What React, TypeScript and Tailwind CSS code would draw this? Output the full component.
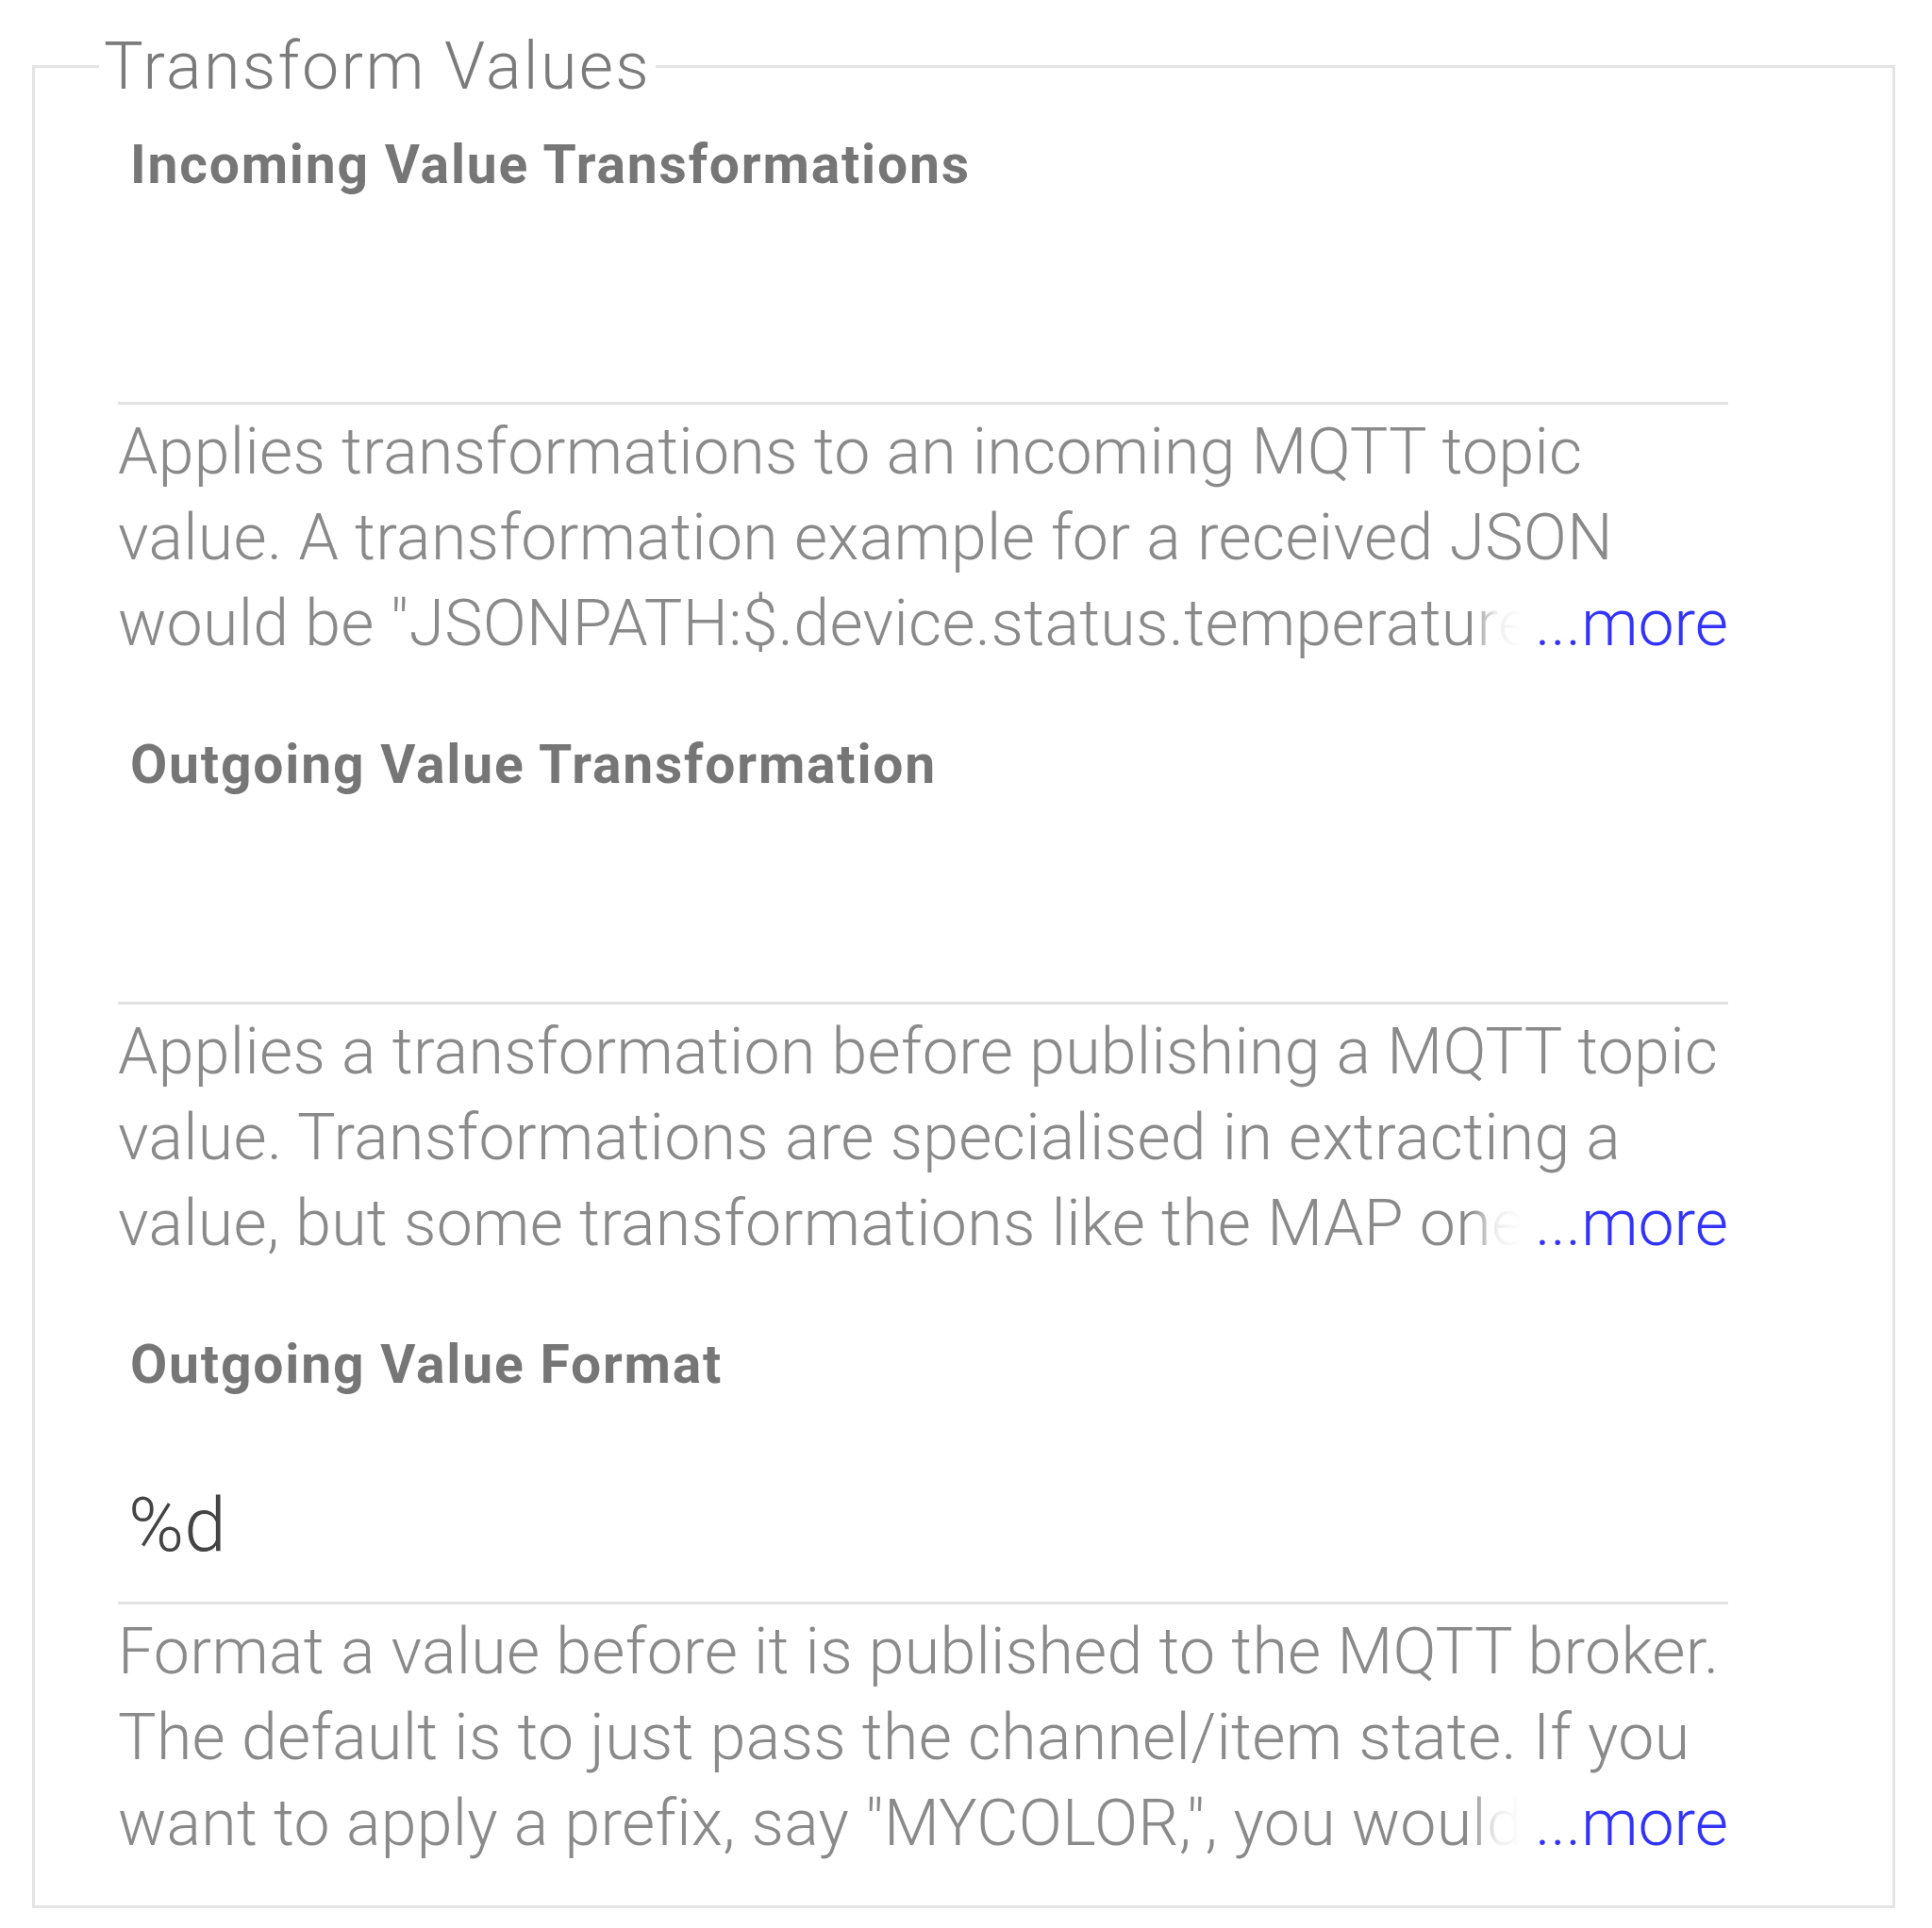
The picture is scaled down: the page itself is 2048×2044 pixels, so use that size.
import React from "react";

type Field = {
  label: string;
  value?: string;
  description: string;
};

const fields: Field[] = [
  {
    label: "Incoming Value Transformations",
    description:
      'Applies transformations to an incoming MQTT topic value. A transformation example for a received JSON would be "JSONPATH:$.device.status.temperature" for a json {device: {status: { temperature: 23.2 }}}. You can chain transformations by separating them with the intersection character ∩.',
  },
  {
    label: "Outgoing Value Transformation",
    description:
      "Applies a transformation before publishing a MQTT topic value. Transformations are specialised in extracting a value, but some transformations like the MAP one could be useful.",
  },
  {
    label: "Outgoing Value Format",
    value: "%d",
    description:
      'Format a value before it is published to the MQTT broker. The default is to just pass the channel/item state. If you want to apply a prefix, say "MYCOLOR,", you would use "MYCOLOR,%s". Currently only "%s" is supported.',
  },
];

function ConfigField({ field, first }: { field: Field; first: boolean }) {
  return (
    <div className={first ? "flex flex-col" : "flex flex-col mt-[70px]"}>
      <div className="pl-[13px] text-[57px] font-bold leading-[68px] tracking-[1.8px] text-[#767676]">{field.label}</div>
      <div className="flex h-[217px] items-end pl-[11px] pb-[34px] text-[80px] font-light leading-[94px] text-[#444]">
        {field.value}
      </div>
      <div className="h-[3px] bg-[#e2e2e2]" />
      <div className="relative mt-[5px] h-[273px] overflow-hidden text-[68px] font-light leading-[91px] tracking-[0.3px] text-[#8a8a8a]">
        {field.description}
        <div className="absolute bottom-0 right-0 flex h-[91px]">
          <div className="w-[55px] bg-linear-to-r from-white/0 via-white/85 to-white" />
          <span className="bg-white pl-[14px] tracking-normal text-[#3333ff]">...more</span>
        </div>
      </div>
    </div>
  );
}

export default function App() {
  return (
    <div className="min-h-screen bg-white pl-[34px] pr-[39px] pt-[28px] font-['Roboto',sans-serif]">
      <fieldset className="border-[3px] border-[#e4e4e4] pt-[29px] pb-[41px]">
        <legend className="ml-[68px] px-[5px] text-[70px] font-light leading-[84px] tracking-[2.3px] text-[#7b7b7b]">
          Transform Values
        </legend>
        <div className="ml-[88px] w-[1707px]">
          {fields.map((f, i) => (
            <ConfigField key={f.label} field={f} first={i === 0} />
          ))}
        </div>
      </fieldset>
    </div>
  );
}
